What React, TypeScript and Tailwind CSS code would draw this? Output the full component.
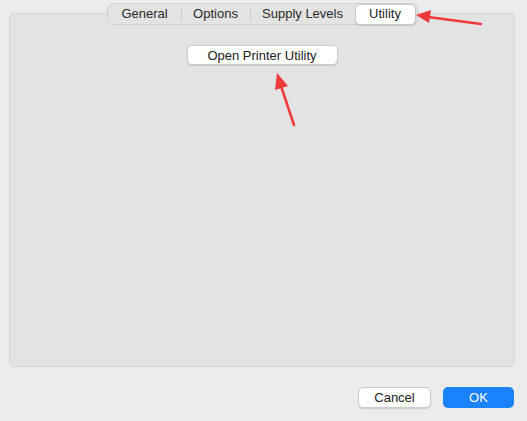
const FONT = { fontFamily: '"Liberation Sans", Arial, sans-serif' }

const TABS = ['General', 'Options', 'Supply Levels', 'Utility']

function TabBar() {
  return (
    <div className="-mt-[11px] self-center flex items-center h-[22px] rounded-[6px] bg-[#e3e3e3] border border-[#d3d3d3] pl-[1px] pr-[1px]">
      <div className="w-[72px] text-center text-[13px] text-[#2a2a2a]">General</div>
      <div className="w-px h-[13px] bg-[#c9c9c9]" />
      <div className="w-[68px] text-center text-[13px] text-[#2a2a2a]">Options</div>
      <div className="w-px h-[13px] bg-[#c9c9c9]" />
      <div className="w-[104px] text-center text-[13px] text-[#2a2a2a]">Supply Levels</div>
      <div className="w-[61px] h-[21px] flex items-center justify-center rounded-[5px] bg-white border border-[#c8c8c8] shadow-[0_1px_1px_rgba(0,0,0,0.15)] text-[13px] text-[#1f1f1f]">
        Utility
      </div>
    </div>
  )
}

function Arrows() {
  return (
    <svg className="absolute inset-0 pointer-events-none" width="527" height="421" viewBox="0 0 527 421">
      <line x1="481" y1="24" x2="428" y2="17" stroke="#f0393b" strokeWidth="2.5" strokeLinecap="round" />
      <polygon points="416,15 431,10 429,23" fill="#f0393b" />
      <line x1="294" y1="125" x2="281" y2="86" stroke="#f0393b" strokeWidth="2.5" strokeLinecap="round" />
      <polygon points="277,73 275,90 288,86" fill="#f0393b" />
    </svg>
  )
}

export default function App() {
  return (
    <div className="relative w-[527px] h-[421px] bg-[#ececec] overflow-hidden flex flex-col" style={FONT}>
      <div className="mt-[13px] mx-[9px] w-[506px] h-[354px] rounded-[5px] bg-[#e3e3e3] border border-[#d6d6d6] flex flex-col">
        <TabBar />
        <button className="mt-[20px] self-center w-[151px] h-[20px] rounded-[5px] bg-white border border-[#cdcdcd] shadow-[0_1px_1px_rgba(0,0,0,0.15)] text-[13px] text-[#222]">
          Open Printer Utility
        </button>
      </div>
      <div className="mt-[20px] mr-[13px] flex justify-end gap-[12px]">
        <button className="w-[73px] h-[21px] rounded-[5px] bg-white border border-[#cdcdcd] shadow-[0_1px_1px_rgba(0,0,0,0.15)] text-[13px] text-[#222]">
          Cancel
        </button>
        <button className="w-[71px] h-[21px] rounded-[5px] bg-[#1a82fb] text-[13px] text-white">
          OK
        </button>
      </div>
      <Arrows />
    </div>
  )
}
